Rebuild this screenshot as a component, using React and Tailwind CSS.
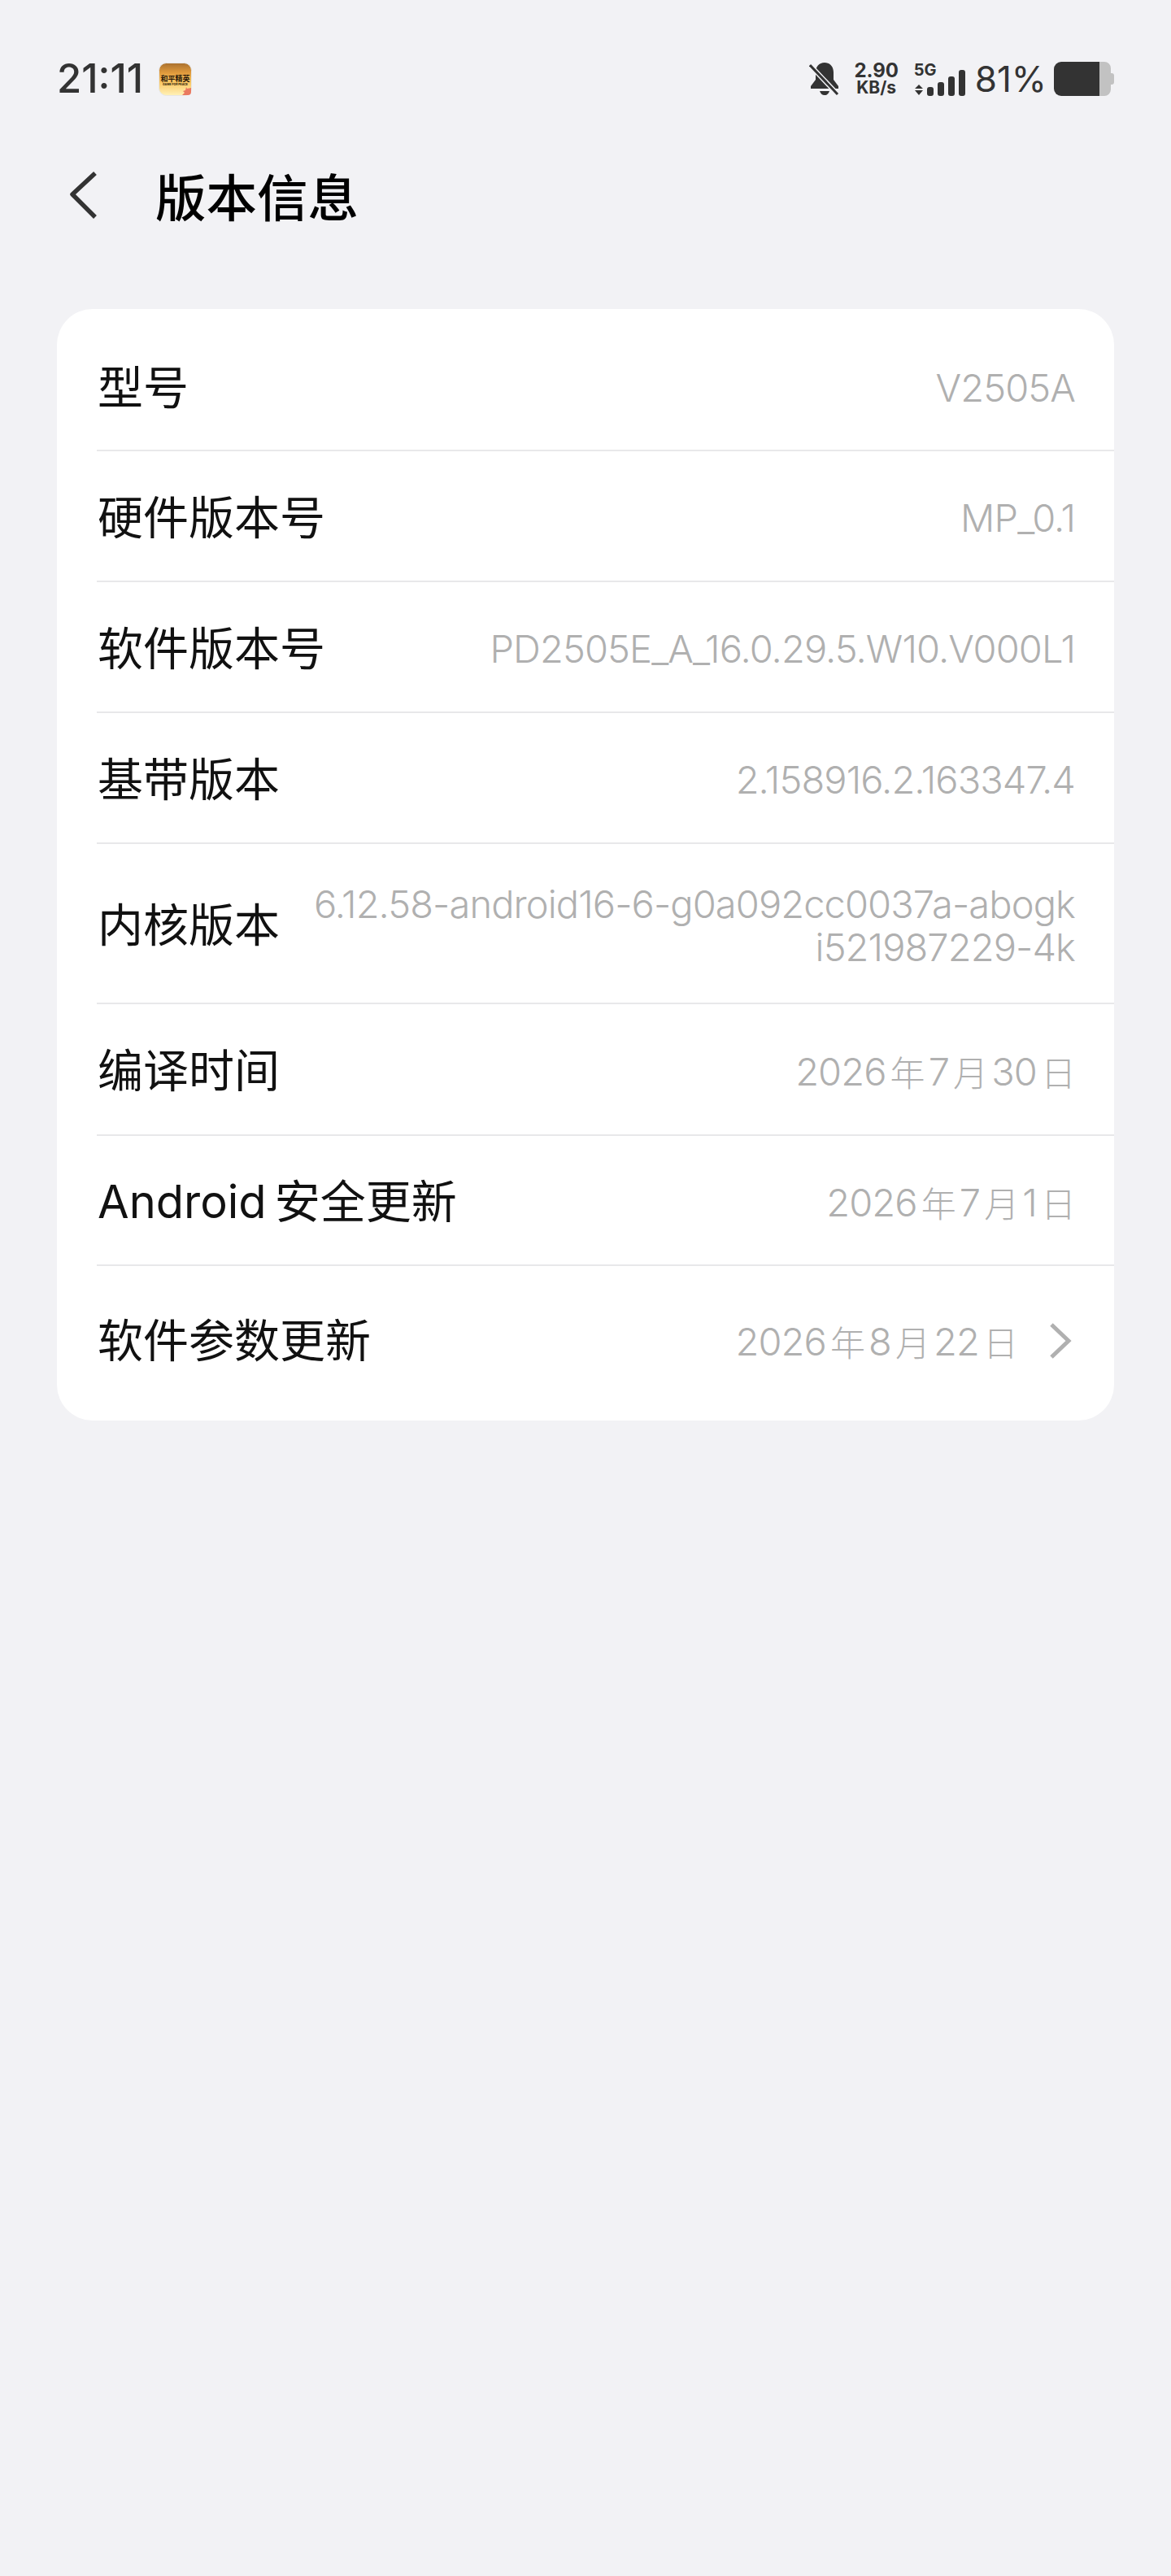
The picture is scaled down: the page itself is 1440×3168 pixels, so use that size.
import React from "react"

const cjk = '"Noto Sans CJK SC", sans-serif'
const inter = `Inter, "Noto Sans CJK SC", sans-serif`

// number + small cjk unit, e.g. 2026 年 7 月 30 日
function DateText({ parts }) {
  return (
    <span className="flex items-center">
      {parts.map((p, i) =>
        i % 2 === 0 ? (
          <span key={i}>{p}</span>
        ) : i === parts.length - 1 ? (
          <span key={i} className="text-[43px] ml-[5px]" style={{ fontFamily: cjk }}>{p}</span>
        ) : (
          <span key={i} className="text-[43px] mx-[5px]" style={{ fontFamily: cjk }}>{p}</span>
        )
      )}
    </span>
  )
}

const rows = [
  { label: "型号", value: "V2505A", height: "h-[175px]", extra: "pt-[18px]" },
  { label: "硬件版本号", value: "MP_0.1", height: "h-[161px]", extra: "pt-[2px]" },
  { label: "软件版本号", value: "PD2505E_A_16.0.29.5.W10.V000L1", height: "h-[161px]", extra: "pt-[2px]" },
  { label: "基带版本", value: "2.158916.2.163347.4", height: "h-[161px]", extra: "pt-[2px]" },
  { label: "内核版本", value: ["6.12.58-android16-6-g0a092cc0037a-abogk", "i521987229-4k"], height: "h-[197px]", extra: "pt-[2px]" },
  { label: "编译时间", value: <DateText parts={["2026", "年", "7", "月", "30", "日"]} />, height: "h-[162px]", extra: "pt-[2px]" },
  { label: "Android\u2009安全更新", value: <DateText parts={["2026", "年", "7", "月", "1", "日"]} />, height: "h-[160px]", extra: "pt-[2px]" },
  { label: "软件参数更新", value: <DateText parts={["2026", "年", "8", "月", "22", "日"]} />, height: "h-[190px]", extra: "pb-[6px]", arrow: true },
]

function GameIcon() {
  return (
    <svg width="41" height="41" viewBox="0 0 41 41">
      <defs>
        <linearGradient id="game" x1="0" y1="0" x2="0" y2="1">
          <stop offset="0" stopColor="#a9702f" />
          <stop offset="0.3" stopColor="#e09a3c" />
          <stop offset="0.6" stopColor="#fbc864" />
          <stop offset="1" stopColor="#fff2b8" />
        </linearGradient>
      </defs>
      <rect x="0.5" y="0.5" width="40" height="40" rx="9" fill="url(#game)" stroke="#e6e6e6" />
      <text x="20.5" y="23" textAnchor="middle" fontSize="9" fontWeight="700" fill="#2a1a0a" fontFamily={cjk}>和平精英</text>
      <text x="20.5" y="27.5" textAnchor="middle" fontSize="3.5" fontWeight="700" fill="#2a1a0a" fontFamily={inter}>GAME FOR PEACE</text>
      <path d="M40 31l-5 1-1-2-1 4-3 1 2 2-3 3h7a4 4 0 0 0 4-4z" fill="#ea7a60" />
    </svg>
  )
}

function StatusIcons() {
  return (
    <div className="flex items-center text-[#333333]" style={{ fontFamily: inter }}>
      <svg width="38" height="42" viewBox="0 0 38 42" className="mr-[18px]">
        <path d="M19 1c7 0 11 5 11 12v9l6 8v3H2v-3l6-8v-9C8 6 12 1 19 1z" fill="#333333" />
        <path d="M13 36h12c-1 3-3 5-6 5s-5-2-6-5z" fill="#333333" />
        <path d="M1 4l34 36" stroke="#f2f2f5" strokeWidth="6" />
        <path d="M1 4l34 36" stroke="#333333" strokeWidth="3" />
      </svg>
      <div className="flex flex-col items-center font-bold mr-[19px] w-[54px]">
        <span className="text-[24px] leading-[22px]">2.90</span>
        <span className="text-[21px] leading-[20px]">KB/s</span>
      </div>
      <div className="relative w-[64px] h-[42px] mr-[11px]">
        <svg width="64" height="42" viewBox="0 0 64 42">
          <path d="M1 33l5-5 5 5zM1 35h10l-5 6z" fill="#333333" />
          <rect x="16" y="31" width="8" height="11" rx="3" fill="#333333" />
          <rect x="29" y="25" width="8" height="17" rx="3" fill="#333333" />
          <rect x="42" y="18" width="8" height="24" rx="3" fill="#333333" />
          <rect x="55" y="10" width="8" height="32" rx="3" fill="#333333" />
        </svg>
        <span className="absolute left-0 top-0 text-[20px] leading-[20px] font-bold">5G</span>
      </div>
      <span className="text-[44px] leading-[42px] font-normal mr-[9px]">81%</span>
      <svg width="74" height="42" viewBox="0 0 74 42">
        <path d="M56 0h6a8 8 0 0 1 8 8v6h1a3 3 0 0 1 3 3v8a3 3 0 0 1-3 3h-1v6a8 8 0 0 1-8 8h-6z" fill="#c2c2c2" />
        <path d="M9 0h47v42H9a9 9 0 0 1-9-9V9a9 9 0 0 1 9-9z" fill="#333333" />
      </svg>
    </div>
  )
}

function InfoRow({ label, value, height, extra, arrow, last }) {
  return (
    <div className={`${height} ${extra} flex items-center pl-[50px] pr-[48px] relative`}>
      <span className="text-[56px] leading-none text-[#111111] whitespace-nowrap shrink-0" style={{ fontFamily: inter }}>
        {label}
      </span>
      <div className="flex-1 flex flex-col items-end text-[47px] tracking-[-0.9px] leading-[53px] font-light text-[#b0b0b0] whitespace-nowrap" style={{ fontFamily: inter }}>
        {[].concat(value).map((line, i) => (
          <span key={i}>{line}</span>
        ))}
      </div>
      {arrow && (
        <svg width="30" height="46" viewBox="0 0 30 46" className="ml-[38px] mr-[3px]">
          <path d="M4 3l21 20L4 43" fill="none" stroke="#b0b0b0" strokeWidth="5" />
        </svg>
      )}
      {!last && <div className="absolute left-[49px] right-0 bottom-0 h-[2px] bg-[#e8e8ea]" />}
    </div>
  )
}

export default function App() {
  return (
    <div className="w-[1440px] h-[3168px] bg-[#f2f2f5] px-[70px] pt-[76px]" style={{ fontFamily: cjk }}>
      {/* status bar */}
      <div className="flex items-center justify-between h-[42px]">
        <div className="flex items-center">
          <span className="text-[49px] leading-[42px] font-medium text-[#333333] mr-[19px]" style={{ fontFamily: inter }}>21:11</span>
          <GameIcon />
        </div>
        <StatusIcons />
      </div>

      {/* title */}
      <div className="flex items-center h-[62px] mt-[91px]">
        <svg width="36" height="62" viewBox="0 0 36 62" className="ml-[14px] mr-[71px]">
          <path d="M33 4L5 30l28 28" fill="none" stroke="#333333" strokeWidth="5.5" strokeLinejoin="round" />
        </svg>
        <h1 className="text-[62.5px] leading-none font-medium text-black">版本信息</h1>
      </div>

      {/* info card */}
      <div className="mt-[109px] bg-white rounded-[44px] overflow-hidden">
        {rows.map((r, i) => (
          <InfoRow key={r.label} {...r} last={i === rows.length - 1} />
        ))}
      </div>
    </div>
  )
}
